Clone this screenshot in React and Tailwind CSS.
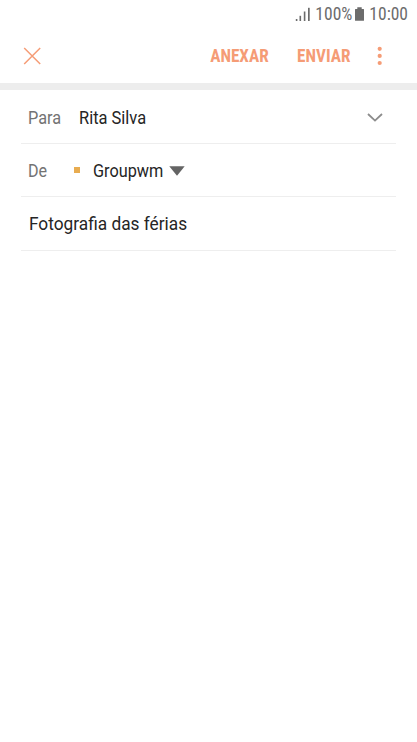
function StatusBar() {
  return (
    <div className="flex h-7 items-center justify-end pr-[9px] text-[17.5px] leading-7 text-[#6c6c6c] font-stretch-condensed">
      <svg className="mr-1 h-[15px] w-4" viewBox="0 0 16 15" fill="currentColor">
        <rect x="0.8" y="12" width="1.6" height="2" />
        <rect x="4.5" y="8.8" width="1.6" height="5.2" />
        <rect x="8.8" y="4.5" width="1.6" height="9.5" />
        <rect x="13" y="0.8" width="1.7" height="13.2" />
      </svg>
      <span>100%</span>
      <svg className="ml-[3px] mr-[5px] h-[15px] w-[9px]" viewBox="0 0 9 15" fill="currentColor">
        <path d="M2.3 0.3h4.4v1.7H8.5q.5 0 .5.5v10.8q0 .5-.5.5H.5q-.5 0-.5-.5V2.5q0-.5.5-.5h1.8z" />
      </svg>
      <span>10:00</span>
    </div>
  );
}

function ActionBar() {
  return (
    <header className="flex h-[55px] items-center pl-[23px] pr-[34px] text-[#f59c76]">
      <button aria-label="Fechar">
        <svg className="h-[18px] w-[18px]" viewBox="0 0 18 18" fill="none" stroke="currentColor" strokeWidth="1.5">
          <path d="M1.2 1l16 16M17.2 1l-16 16" />
        </svg>
      </button>
      <div className="ml-auto flex items-center text-[17.5px] font-bold font-stretch-condensed">
        <button className="origin-right scale-x-98 pt-0.5">ANEXAR</button>
        <button className="ml-[27px] origin-right scale-x-98 pt-0.5">ENVIAR</button>
        <button className="ml-[26px]" aria-label="Mais">
          <svg className="h-5 w-[7px]" viewBox="0 0 7 20" fill="currentColor">
            <circle cx="3.7" cy="2.8" r="2.1" />
            <circle cx="3.7" cy="9.9" r="2.1" />
            <circle cx="3.7" cy="17" r="2.1" />
          </svg>
        </button>
      </div>
    </header>
  );
}

export default function App() {
  return (
    <div className="h-[742px] w-[417px] overflow-hidden bg-white font-['Roboto',sans-serif]">
      <StatusBar />
      <ActionBar />
      <div className="h-[7px] bg-[#ededed]" />

      {/* Message fields */}
      <main className="ml-[21px] w-[375px] text-[17.5px] text-[#252525]">
        <div className="flex h-[54px] items-center border-b border-[#eeeeee] pl-[7px] pr-[13px] pt-[3px]">
          <span className="w-[51px] origin-left scale-x-93 text-[#737373]">Para</span>
          <span className="origin-left scale-x-94">Rita Silva</span>
          <svg className="mb-px ml-auto h-[9px] w-4" viewBox="0 0 16 9" fill="none" stroke="#8c8c8c" strokeWidth="1.8">
            <path d="M1 1l7 6.6L15 1" />
          </svg>
        </div>
        <div className="flex h-[53px] items-center border-b border-[#eeeeee] pl-[7px] pt-0.5">
          <span className="w-[46px] origin-left scale-x-92 text-[#737373]">De</span>
          <span className="mb-0.5 mr-[13px] h-1.5 w-1.5 bg-[#e8ac50]" />
          <span className="origin-left scale-x-93">Groupwm</span>
          <svg className="h-[10px] w-4" viewBox="0 0 16 10" fill="#646464">
            <path d="M0.3 0.3h15.4L8 9.7z" />
          </svg>
        </div>
        <div className="flex h-[54px] items-center border-b border-[#eeeeee] pl-2 text-[18px]">
          <span className="origin-left scale-x-96">Fotografia das férias</span>
        </div>
      </main>
    </div>
  );
}
